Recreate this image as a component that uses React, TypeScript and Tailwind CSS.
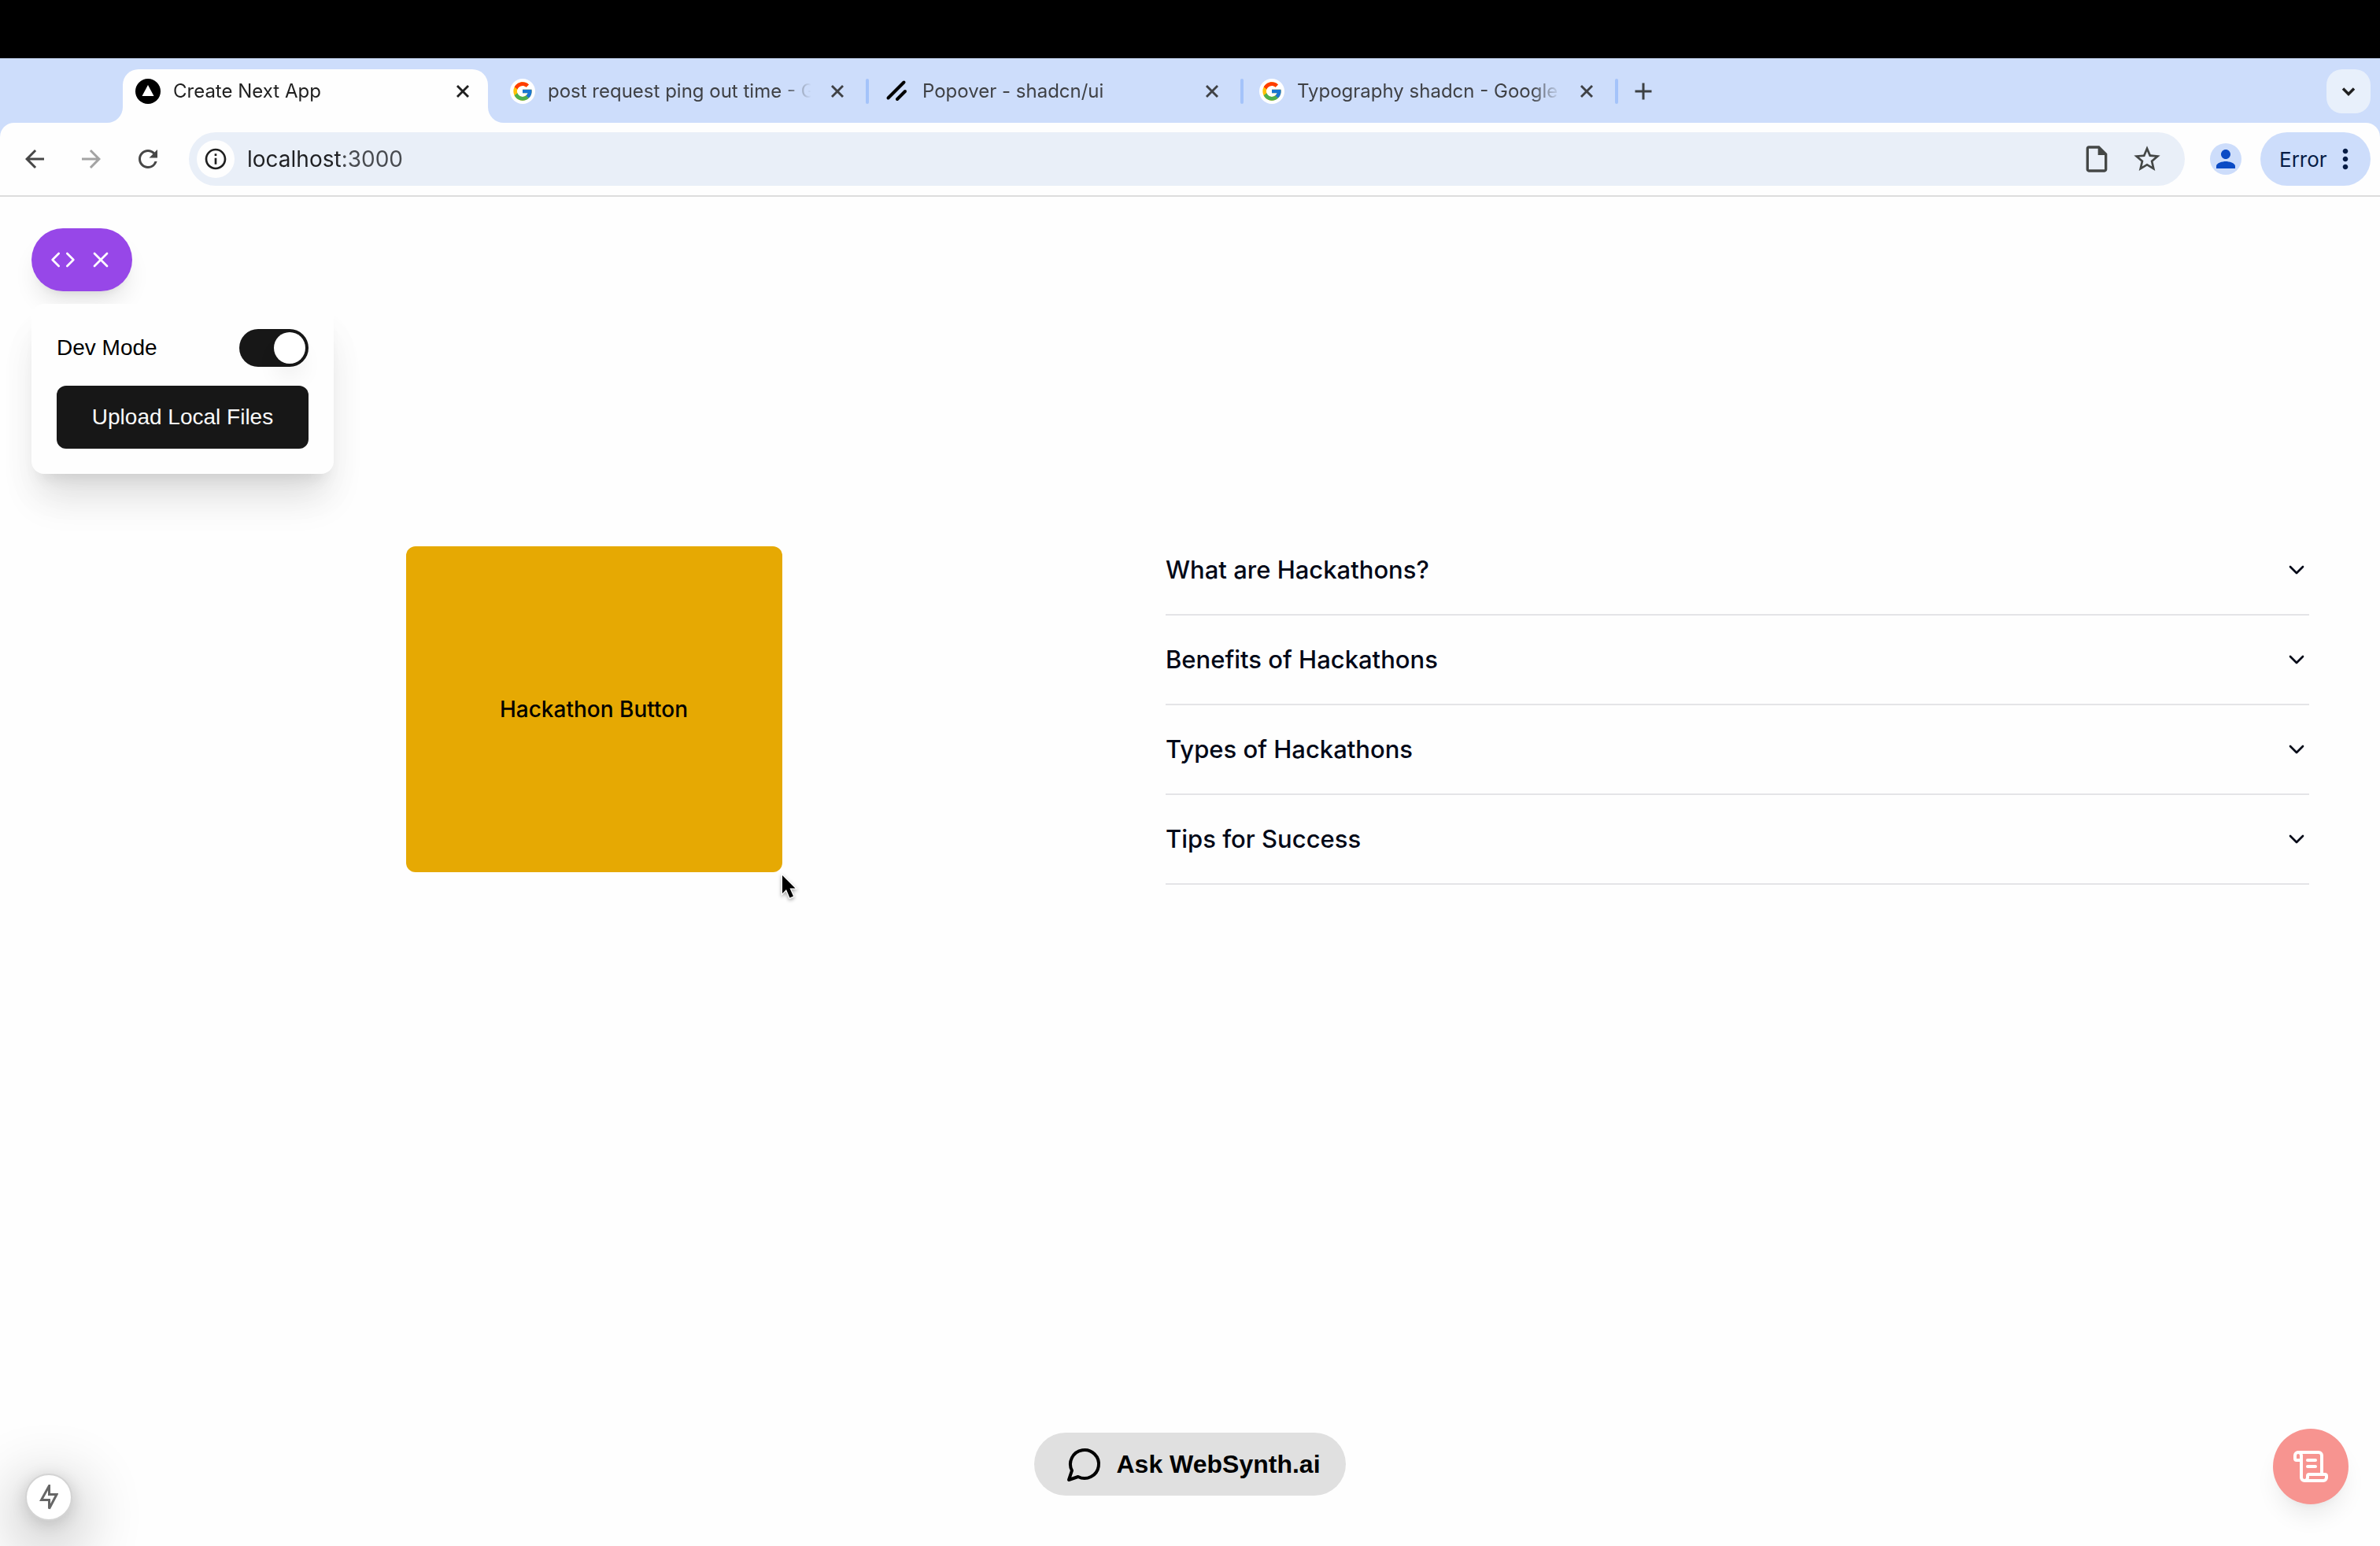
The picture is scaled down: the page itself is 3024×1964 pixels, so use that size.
import React, { useState } from 'react';
import { ChevronDown, ScrollText, X } from 'lucide-react';
import { FcGoogle } from 'react-icons/fc';
import {
  MdAdd,
  MdArrowBack,
  MdArrowForward,
  MdMoreVert,
  MdOutlineInfo,
  MdOutlineInsertDriveFile,
  MdPerson,
  MdRefresh,
  MdStarBorder,
} from 'react-icons/md';

type TabIcon = 'next' | 'google' | 'shadcn';

interface BrowserTab {
  title: string;
  icon: TabIcon;
  active?: boolean;
}

const TABS: BrowserTab[] = [
  { title: 'Create Next App', icon: 'next', active: true },
  { title: 'post request ping out time - Google Search', icon: 'google' },
  { title: 'Popover - shadcn/ui', icon: 'shadcn' },
  { title: 'Typography shadcn - Google Search', icon: 'google' },
];

const SECTIONS = [
  {
    title: 'What are Hackathons?',
    body: 'Hackathons are events where people build a project together in a short time.',
  },
  {
    title: 'Benefits of Hackathons',
    body: 'They help you learn new skills, meet people and ship ideas quickly.',
  },
  {
    title: 'Types of Hackathons',
    body: 'There are online, in-person, internal and themed hackathons.',
  },
  {
    title: 'Tips for Success',
    body: 'Keep the scope small, split the work early and practise your demo.',
  },
];

const Favicon: React.FC<{ icon: TabIcon }> = ({ icon }) => {
  if (icon === 'google') {
    return (
      <span className="flex size-8 shrink-0 items-center justify-center rounded-full bg-white">
        <FcGoogle className="size-7" />
      </span>
    );
  }
  if (icon === 'shadcn') {
    return (
      <svg viewBox="0 0 256 256" className="size-8 shrink-0" stroke="#000" strokeWidth="32" strokeLinecap="round">
        <line x1="208" y1="128" x2="128" y2="208" />
        <line x1="196" y1="36" x2="36" y2="196" />
      </svg>
    );
  }
  return (
    <svg viewBox="0 0 32 32" className="size-8 shrink-0">
      <circle cx="16" cy="16" r="16" fill="#000" />
      <path d="M16 8l7.5 14h-15z" fill="#fff" />
    </svg>
  );
};

const Tab: React.FC<{ tab: BrowserTab }> = ({ tab }) => (
  <div
    className={
      tab.active
        ? 'relative flex h-[68px] w-[464px] items-center gap-4 rounded-t-[20px] bg-[#fefefe] pb-3 pl-4 pr-[18px] text-[#1f1f1f]'
        : 'relative flex h-[68px] w-[464px] items-center gap-4 pb-3 pl-4 pr-[18px] text-[#3f4145]'
    }
  >
    {tab.active && (
      <>
        <svg viewBox="0 0 20 20" className="absolute -left-5 bottom-0 size-5" fill="#fefefe">
          <path d="M20 0v20H0A20 20 0 0 0 20 0z" />
        </svg>
        <svg viewBox="0 0 20 20" className="absolute -right-5 bottom-0 size-5" fill="#fefefe">
          <path d="M0 0v20h20A20 20 0 0 1 0 0z" />
        </svg>
      </>
    )}
    <Favicon icon={tab.icon} />
    <span className="min-w-0 flex-1 overflow-hidden whitespace-nowrap text-2xl [mask-image:linear-gradient(90deg,#000_88%,transparent_99%)]">
      {tab.title}
    </span>
    <button aria-label={`Close ${tab.title}`} className="shrink-0">
      <X className="size-7" strokeWidth={2.5} strokeLinecap="butt" />
    </button>
  </div>
);

const TabStrip = () => (
  <div className="flex items-end bg-[#cdddfb] pl-[156px] pr-3 pt-[14px]">
    {TABS.map((tab) => (
      <React.Fragment key={tab.title}>
        <Tab tab={tab} />
        <span className="flex h-[68px] w-3 items-center justify-center pb-3">
          {!tab.active && <span className="h-8 w-1 rounded-full bg-[#a4c3fa]" />}
        </span>
      </React.Fragment>
    ))}
    <button aria-label="New tab" className="mb-3 flex size-14 items-center justify-center text-[#3c4043]">
      <MdAdd className="size-9" />
    </button>
    <button
      aria-label="Search tabs"
      className="mb-3 ml-auto flex size-14 items-center justify-center rounded-[20px] bg-[#e8f0fb] text-[#1f1f1f]"
    >
      <ChevronDown className="size-7" strokeWidth={3} strokeLinecap="butt" strokeLinejoin="miter" />
    </button>
  </div>
);

const Toolbar = () => {
  const [url, setUrl] = useState('localhost:3000');

  return (
    <div className="bg-[#cdddfb]">
      <div className="flex items-center rounded-t-[18px] border-b-2 border-[#dddddd] bg-[#fefefe] py-3 pl-2 pr-3">
        <button aria-label="Back" className="flex w-[72px] justify-center text-[#474747]">
          <MdArrowBack className="size-9" />
        </button>
        <button aria-label="Forward" className="flex w-[72px] justify-center text-[#a3a3a3]">
          <MdArrowForward className="size-9" />
        </button>
        <button aria-label="Reload" className="flex w-[72px] justify-center text-[#474747]">
          <MdRefresh className="size-9" />
        </button>
        <div className="ml-4 flex h-[68px] flex-1 items-center rounded-full bg-[#e9eff8] pl-[10px] pr-7">
          <button
            aria-label="Site information"
            className="flex size-12 items-center justify-center rounded-full bg-[#fefefe] text-[#1f1f1f]"
          >
            <MdOutlineInfo className="size-8" />
          </button>
          <input
            aria-label="Address"
            value={url}
            onChange={(e) => setUrl(e.target.value)}
            className="ml-4 min-w-0 flex-1 bg-[linear-gradient(90deg,#1f2023_119px,#474a4f_119px)] bg-clip-text text-[28px] leading-10 text-transparent outline-none"
          />
          <button aria-label="Page details" className="text-[#444746]">
            <MdOutlineInsertDriveFile className="size-10" />
          </button>
          <button aria-label="Bookmark this tab" className="ml-6 text-[#444746]">
            <MdStarBorder className="size-10" />
          </button>
        </div>
        <button
          aria-label="Profile"
          className="ml-8 flex size-10 items-center justify-center rounded-full bg-[#cdddfb] text-[#0b4bc5]"
        >
          <MdPerson className="size-9" />
        </button>
        <button className="ml-6 flex h-[68px] w-[140px] items-center justify-between rounded-full bg-[#cdddfb] pl-6 pr-3 text-[26px] text-[#061c45]">
          Error
          <MdMoreVert className="size-10" />
        </button>
      </div>
    </div>
  );
};

const DevPanel = () => {
  const [devMode, setDevMode] = useState(true);

  return (
    <div className="absolute left-10 top-10 flex flex-col items-start gap-4 font-['Liberation_Sans',Arial,sans-serif] text-[28px] text-black">
      <button
        aria-label="Close dev tools"
        className="flex h-20 w-32 items-center justify-center gap-4 rounded-full bg-[#9747e8] text-white shadow-[0_20px_30px_-6px_rgba(0,0,0,0.1),0_8px_12px_-8px_rgba(0,0,0,0.1)]"
      >
        <svg
          viewBox="0 0 24 24"
          className="size-8"
          fill="none"
          stroke="currentColor"
          strokeWidth="2"
          strokeLinecap="round"
          strokeLinejoin="round"
        >
          <path d="m16 18 6-6-6-6M8 6l-6 6 6 6" />
        </svg>
        <X className="size-8" />
      </button>
      <div className="flex w-96 flex-col gap-6 rounded-2xl bg-[#fefefe] p-8 shadow-[0_40px_50px_-10px_rgba(0,0,0,0.1),0_16px_20px_-12px_rgba(0,0,0,0.1),0_30px_50px_rgba(0,0,0,0.03)]">
        <label className="flex h-12 items-center justify-between">
          Dev Mode
          <input
            type="checkbox"
            role="switch"
            className="peer sr-only"
            checked={devMode}
            onChange={(e) => setDevMode(e.target.checked)}
          />
          <span className="flex h-12 w-[88px] items-center rounded-full bg-neutral-300 p-1 peer-checked:justify-end peer-checked:bg-[#171717]">
            <span className="size-10 rounded-full bg-white shadow-[0_20px_30px_-6px_rgba(0,0,0,0.1)]" />
          </span>
        </label>
        <button className="h-20 rounded-xl bg-[#171717] text-neutral-50">Upload Local Files</button>
      </div>
    </div>
  );
};

const Accordion = () => {
  const [open, setOpen] = useState<string | null>(null);

  return (
    <div>
      {SECTIONS.map((section) => (
        <div key={section.title} className="border-b-2 border-[#e4e4e7]">
          <button
            onClick={() => setOpen(open === section.title ? null : section.title)}
            aria-expanded={open === section.title}
            className="flex h-28 w-full items-center justify-between text-left text-[31px] font-medium text-[#020817]"
          >
            {section.title}
            <ChevronDown className={open === section.title ? 'size-8 rotate-180' : 'size-8'} />
          </button>
          {open === section.title && <p className="pb-8 text-[28px] text-[#020817]">{section.body}</p>}
        </div>
      ))}
    </div>
  );
};

const App: React.FC = () => {
  return (
    <div className="flex min-h-screen flex-col bg-[#fefefe] font-[Inter,sans-serif]">
      <div className="h-[74px] bg-black" />
      <TabStrip />
      <Toolbar />

      <main className="relative flex-1">
        <div className="grid grid-cols-2 pl-7 pr-[90px] pt-[418px]">
          <div className="flex items-start justify-center pt-[26px]">
            <div className="relative">
              <button className="block h-[414px] w-[478px] rounded-xl bg-[#e6a903] text-[28px] font-medium text-black">
                Hackathon Button
              </button>
              {/* mouse pointer */}
              <svg
                viewBox="0 0 28 40"
                className="absolute -right-6 top-full h-10 w-7 drop-shadow-[0_2px_2px_rgba(0,0,0,0.35)]"
              >
                <path
                  d="M4 4v23l5-5 4.500 10.500 4.500-2-4.500-10h7z"
                  fill="#000"
                  stroke="#fff"
                  strokeWidth="2.500"
                  paintOrder="stroke"
                />
              </svg>
            </div>
          </div>
          <Accordion />
        </div>

        <DevPanel />

        <button
          aria-label="Static route indicator"
          className="absolute bottom-8 left-8 flex size-[60px] items-center justify-center rounded-full border-2 border-[#d4d4d4] bg-white text-[#666666] shadow-[0_22px_80px_10px_rgba(0,0,0,0.3),0_4px_20px_rgba(0,0,0,0.14)]"
        >
          <svg viewBox="0 0 24 32" className="h-8 w-6" fill="none" stroke="currentColor" strokeWidth="3">
            <path d="M12.500 1.500V12.500H22L12.500 30.500V19.500H2.500z" />
          </svg>
        </button>

        <div className="absolute inset-x-0 bottom-16 flex justify-center">
          <button className="flex h-20 items-center gap-4 rounded-full bg-[#e0e0e0] pl-10 pr-8 font-['Liberation_Sans',Arial,sans-serif] text-[32px] font-bold text-black">
            <svg
              viewBox="0 0 24 24"
              className="size-12"
              fill="none"
              stroke="currentColor"
              strokeWidth="2"
              strokeLinecap="round"
              strokeLinejoin="round"
            >
              <path d="M7.900 20A9 9 0 1 0 4 16.100L2 22Z" />
            </svg>
            Ask WebSynth.ai
          </button>
        </div>

        <button
          aria-label="Open transcript"
          className="absolute bottom-[53px] right-10 flex size-24 items-center justify-center rounded-full bg-[#f79490] text-white shadow-[0_20px_30px_-6px_rgba(0,0,0,0.08),0_8px_12px_-8px_rgba(0,0,0,0.06)]"
        >
          <ScrollText className="size-12" />
        </button>
      </main>
    </div>
  );
};

export default App;
